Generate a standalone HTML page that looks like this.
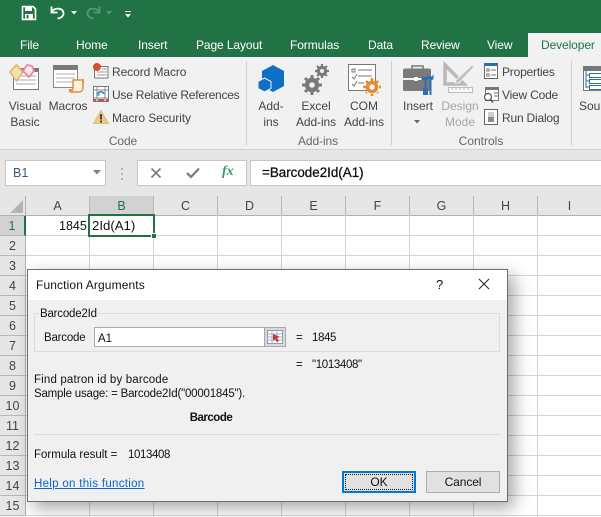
<!DOCTYPE html>
<html><head><meta charset="utf-8">
<style>
html,body{margin:0;padding:0;width:601px;height:517px;overflow:hidden;background:#fff}
body{position:relative;font-family:"Liberation Sans",sans-serif;font-size:12px;color:#444}
.a{position:absolute}
.t{position:absolute;white-space:nowrap;line-height:16px;transform-origin:0 50%}
.c{text-align:center;transform-origin:50% 50%}
.tab{color:#fff;top:37px;letter-spacing:-.1px}
.r{color:#444}
svg{position:absolute;overflow:visible}
.hl{position:absolute;left:0;width:601px;height:1px;background:#d4d4d4}
.vl{position:absolute;top:215px;width:1px;height:302px;background:#d4d4d4}
.ch{position:absolute;top:196px;height:19px;line-height:21px;text-align:center;width:63px;color:#444;font-size:12.5px;border-right:1px solid #b8b8b8;border-bottom:1px solid #b0b0b0}
.rh{position:absolute;left:0;width:25px;height:19px;line-height:21px;text-align:center;background:#e6e6e6;border-right:1px solid #b0b0b0;border-bottom:1px solid #b8b8b8;color:#444;font-size:12.5px}
.d{color:#111}
</style></head><body>

<div class="a" style="left:0;top:0;width:601px;height:57px;background:#217346"></div>
<div class="a" style="left:0;top:57px;width:601px;height:92px;background:#f1f1f1"></div>
<div class="a" style="left:0;top:149px;width:601px;height:47px;background:#e6e6e6;border-top:1px solid #d0d0d0;box-sizing:border-box"></div>

<!-- QAT -->
<svg style="left:22px;top:6px" width="14" height="14" viewBox="0 0 14 14"><path d="M0.5 0.5H11L13.5 3V13.5H0.5Z" fill="none" stroke="#fff" stroke-width="1.6"/><rect x="3" y="1" width="7" height="4" fill="#fff"/><rect x="3" y="8" width="8" height="5" fill="#fff"/><rect x="4.5" y="9" width="2" height="3.5" fill="#217346"/></svg>
<svg style="left:51px;top:6px" width="14" height="14" viewBox="0 0 14 14"><path d="M1 5.5C4 1.5 12 1.5 12.5 7C12.8 10.5 9 12.5 6.5 12.5" fill="none" stroke="#fff" stroke-width="1.8"/><path d="M0.5 0.5V6.5H6.5" fill="none" stroke="#fff" stroke-width="1.8"/></svg>
<svg style="left:71px;top:11px" width="6" height="4"><path d="M0 0H6L3 3.5Z" fill="#fff"/></svg>
<svg style="left:86px;top:6px" width="14" height="14" viewBox="0 0 14 14"><path d="M13 5.5C10 1.5 2 1.5 1.5 7C1.2 10.5 5 12.5 7.5 12.5" fill="none" stroke="#5c9478" stroke-width="1.8"/><path d="M13.5 0.5V6.5H7.5" fill="none" stroke="#5c9478" stroke-width="1.8"/></svg>
<svg style="left:106px;top:11px" width="6" height="4"><path d="M0 0H6L3 3.5Z" fill="#5c9478"/></svg>
<svg style="left:125px;top:11px" width="7" height="7"><rect x="0" y="0" width="6" height="1" fill="#fff"/><path d="M0 3H6L3 6.5Z" fill="#fff"/></svg>

<!-- Tabs -->
<div class="a" style="left:528px;top:33px;width:73px;height:24px;background:#f1f1f1"></div>
<div class="t tab" style="left:20px">File</div>
<div class="t tab" style="left:76px">Home</div>
<div class="t tab" style="left:138px">Insert</div>
<div class="t tab" style="left:196px;">Page Layout</div>
<div class="t tab" style="left:290px">Formulas</div>
<div class="t tab" style="left:368px">Data</div>
<div class="t tab" style="left:421px">Review</div>
<div class="t tab" style="left:487px">View</div>
<div class="t tab" style="left:541px;color:#217346">Developer</div>

<!-- Ribbon separators -->
<div class="a" style="left:246px;top:61px;width:1px;height:84px;background:#d0d0d0"></div>
<div class="a" style="left:391px;top:61px;width:1px;height:84px;background:#d0d0d0"></div>
<div class="a" style="left:571px;top:61px;width:1px;height:84px;background:#d0d0d0"></div>

<!-- Visual Basic icon -->
<svg style="left:8px;top:62px" width="34" height="30" viewBox="0 0 34 30">
<rect x="5.500" y="6.500" width="25" height="21" fill="#fff" stroke="#7a7a7a"/><rect x="5" y="6" width="26" height="4" fill="#7a7a7a"/>
<path d="M8 14H28M8 18H28M8 22H28" stroke="#aaa"/>
<path d="M8.500 3L15 10L8.500 19L2 10Z" fill="#f3e2b5" stroke="#e3bb72" stroke-width="1.800"/>
<path d="M19 3L24 4L26 9L21 15L15 9Z" fill="#fbe6ea" stroke="#e58a9f" stroke-width="1.800"/>
</svg>
<div class="t c" style="left:4px;width:42px;top:98px">Visual</div>
<div class="t c" style="left:4px;width:42px;top:114px">Basic</div>

<!-- Macros icon -->
<svg style="left:52px;top:64px" width="34" height="30" viewBox="0 0 34 30">
<rect x="1.500" y="1.500" width="24" height="22" fill="#fff" stroke="#8a8a8a"/><rect x="1" y="1" width="25" height="5" fill="#7a7a7a"/>
<path d="M4 10H23M4 14H23M4 18H23" stroke="#b0b0b0"/>
<path d="M21 16H31V24C31 26.500 29 28 27 28H18C20 27 21 26 21 24Z" fill="#fbf0e2" stroke="#e2913e" stroke-width="1.500"/>
<path d="M17 25H21V28H17Z" fill="#e2913e"/><path d="M30 15H32V19H30Z" fill="#e2913e"/>
</svg>
<div class="t c" style="left:46px;width:44px;top:98px;letter-spacing:-.1px">Macros</div>

<!-- Small code icons -->
<svg style="left:93px;top:63px" width="16" height="16" viewBox="0 0 16 16"><rect x="1.500" y="3.500" width="13.500" height="11.500" fill="#fff" stroke="#777"/><path d="M9 6H14M4 9H14M4 12H14" stroke="#999"/><circle cx="4" cy="4" r="4" fill="#d2502e"/></svg>
<svg style="left:93px;top:86px" width="16" height="16" viewBox="0 0 16 16"><rect x="0.500" y="0.500" width="15" height="15" fill="#fff" stroke="#777"/><path d="M0 4H16M4 0V16M12 0V16M0 12H16" stroke="#888"/><path d="M5 8C6 5 10 5 11 8" fill="none" stroke="#2f7cc1" stroke-width="1.500"/><path d="M4 6V9H7" fill="none" stroke="#2f7cc1"/><rect x="1" y="13" width="2" height="2" fill="#d2502e"/><rect x="5" y="13" width="6" height="2" fill="#d2502e"/><rect x="13" y="13" width="2" height="2" fill="#d2502e"/></svg>
<svg style="left:93px;top:110px" width="16" height="15" viewBox="0 0 16 15"><path d="M8 0.500L15.500 13.500H0.500Z" fill="#eec88a" stroke="#e3bb7a"/><rect x="7" y="4" width="2" height="5.500" fill="#444"/><rect x="7" y="10.500" width="2" height="2" fill="#444"/></svg>
<div class="t" style="left:112px;top:64px;letter-spacing:-.08px">Record Macro</div>
<div class="t" style="left:112px;top:87px;letter-spacing:-.23px">Use Relative References</div>
<div class="t" style="left:112px;top:110px;letter-spacing:-.08px">Macro Security</div>
<div class="t c" style="left:100px;width:46px;top:133px;color:#666;letter-spacing:-.1px">Code</div>

<!-- Add-ins icon -->
<svg style="left:258px;top:65px" width="27" height="28" viewBox="0 0 27 28">
<path d="M15 0L26 6V21L15 27L4 21V6Z" fill="#0f6fc6"/>
<path d="M6.500 13L13 16.500V23.500L6.500 27L0 23.500V16.500Z" fill="#0f6fc6" stroke="#f1f1f1" stroke-width="1"/>
</svg>
<div class="t c" style="left:251px;width:40px;top:98px">Add-</div>
<div class="t c" style="left:251px;width:40px;top:114px">ins</div>

<!-- Excel addins icon -->
<svg style="left:302px;top:63px" width="28" height="32" viewBox="0 0 28 32">
<g fill="none" stroke="#7a7a7a"><circle cx="20" cy="8" r="3.600" stroke-width="3.200"/><path d="M20 1V15M13 8H27M15 3L25 13M25 3L15 13" stroke-width="2.200" stroke-dasharray="2 10"/>
<circle cx="10" cy="22" r="5" stroke-width="4.400"/><path d="M10 12V32M0 22H20M3 15L17 29M17 15L3 29" stroke-width="3" stroke-dasharray="3 14"/></g>
</svg>
<div class="t c" style="left:294px;width:44px;top:98px">Excel</div>
<div class="t c" style="left:294px;width:44px;top:114px;letter-spacing:-.1px">Add-ins</div>

<!-- COM icon -->
<svg style="left:347px;top:63px" width="34" height="33" viewBox="0 0 34 33">
<rect x="1.500" y="1.500" width="27" height="26" fill="#fff" stroke="#777"/>
<rect x="5" y="6" width="3" height="3" fill="none" stroke="#777"/><path d="M11 7H25M11 13H25M11 20H17" stroke="#777"/><path d="M5 14L7 16L10 11M5 21L7 23L10 18" fill="none" stroke="#777"/>
<circle cx="25" cy="24" r="4.500" fill="none" stroke="#e88a31" stroke-width="3.600"/><path d="M25 15V33M16 24H34M19 18L31 30M31 18L19 30" stroke="#e88a31" stroke-width="2.600" stroke-dasharray="3 13"/>
</svg>
<div class="t c" style="left:341px;width:46px;top:98px">COM</div>
<div class="t c" style="left:341px;width:46px;top:114px;letter-spacing:-.1px">Add-ins</div>
<div class="t c" style="left:296px;width:44px;top:133px;color:#666;letter-spacing:-.1px">Add-ins</div>

<!-- Insert icon -->
<svg style="left:403px;top:64px" width="32" height="32" viewBox="0 0 32 32">
<path d="M9 5V2H20V5" fill="none" stroke="#7a7a7a" stroke-width="1.600"/>
<path d="M0 6Q0 4.500 2 4.500H26Q28 4.500 28 6V14H0Z" fill="#7a7a7a"/>
<path d="M0 16H28V26Q28 27 26 27H2Q0 27 0 26Z" fill="#7a7a7a"/>
<rect x="11" y="13" width="4" height="4" fill="#fff"/><path d="M15 15H19" stroke="#fff"/>
<path d="M19 14H31V32H19Z" fill="#f1f1f1" opacity="0"/>
<path d="M17.500 13H24V16H22.500V24H24V31H19V24H20.500V16H17.500Z" fill="#2b6fb0" transform="translate(1 0)"/>
<path d="M25 10V14Q25 16 27 16V31H29V16Q31 16 31 14V10L29.500 12.500H26.500Z" fill="#2b6fb0" transform="translate(-.5 0)"/>
</svg>
<div class="t c" style="left:398px;width:40px;top:98px">Insert</div>
<svg style="left:414px;top:120px" width="6" height="4"><path d="M0 0H6L3 3.500Z" fill="#666"/></svg>

<!-- Design mode icon -->
<svg style="left:444px;top:63px" width="32" height="32" viewBox="0 0 32 32">
<path d="M1 2V21H20Z" fill="none" stroke="#b8b8b8" stroke-width="3.400"/>
<path d="M12 17L28 2L30 4L15 20H11Z" fill="#bdbdbd" stroke="#f1f1f1"/>
<rect x="4.500" y="24.500" width="24" height="5" fill="#f8f8f8" stroke="#bdbdbd"/><path d="M8 25V27M12 25V27M16 25V27M20 25V27M24 25V27" stroke="#bdbdbd"/>
</svg>
<div class="t c" style="left:439px;width:42px;top:98px;color:#a6a6a6">Design</div>
<div class="t c" style="left:439px;width:42px;top:114px;color:#a6a6a6">Mode</div>

<!-- Small control icons -->
<svg style="left:484px;top:63px" width="14" height="16" viewBox="0 0 14 16"><rect x="0.500" y="0.500" width="13" height="15" fill="#fff" stroke="#666"/><rect x="0" y="0" width="14" height="3" fill="#2b6fb0"/><circle cx="4" cy="7" r="1.300" fill="none" stroke="#777"/><circle cx="4" cy="12" r="1.300" fill="none" stroke="#777"/><path d="M7 7H12M7 12H12" stroke="#777"/></svg>
<svg style="left:483px;top:87px" width="16" height="16" viewBox="0 0 16 16"><rect x="2.500" y="0.500" width="13" height="13" fill="#fff" stroke="#777"/><rect x="2" y="0" width="14" height="3" fill="#777"/><path d="M11 6H15M11 9H15" stroke="#777"/><circle cx="5" cy="10" r="3.500" fill="#fff" stroke="#555" stroke-width="1.200"/><path d="M7.500 12.500L10 15.500" stroke="#555" stroke-width="1.500"/></svg>
<svg style="left:484px;top:109px" width="14" height="16" viewBox="0 0 14 16"><rect x="0.500" y="0.500" width="13" height="15" fill="#fff" stroke="#666"/><rect x="4" y="3" width="6" height="5" fill="#d0d0d0"/><rect x="4" y="8" width="6" height="5" fill="#8a8a8a"/></svg>
<div class="t" style="left:502px;top:64px;letter-spacing:-.2px">Properties</div>
<div class="t" style="left:502px;top:87px;letter-spacing:-.2px">View Code</div>
<div class="t" style="left:502px;top:110px;letter-spacing:-.2px">Run Dialog</div>
<div class="t c" style="left:455px;width:52px;top:133px;color:#666">Controls</div>

<!-- Source -->
<svg style="left:583px;top:66px" width="18" height="26" viewBox="0 0 18 26"><rect x="0.500" y="0.500" width="24" height="24" fill="#fff" stroke="#777"/><rect x="0" y="0" width="24" height="5" fill="#777"/><path d="M3 5V22M3 9H6M3 15H6M3 21H6" stroke="#2b6fb0"/><rect x="6.500" y="7.500" width="14" height="4" fill="none" stroke="#2b6fb0"/><rect x="6.500" y="13.500" width="14" height="4" fill="none" stroke="#2b6fb0"/><rect x="6.500" y="19.500" width="14" height="4" fill="none" stroke="#2b6fb0"/></svg>
<div class="t" style="left:579px;top:98px">Sour</div>

<!-- Formula bar -->
<div class="a" style="left:5px;top:160px;width:101px;height:26px;background:#fff;border:1px solid #c6c6c6;box-sizing:border-box"></div>
<div class="t" style="left:13px;top:165px;color:#3c5a7c;font-size:12.500px">B1</div>
<svg style="left:93px;top:170px" width="8" height="5"><path d="M0 0H8L4 4.500Z" fill="#808080"/></svg>
<div class="a" style="left:121px;top:168px;width:2px;height:2px;background:#b4b4b4;box-shadow:0 5px 0 #b4b4b4,0 10px 0 #b4b4b4"></div>
<div class="a" style="left:137px;top:160px;width:110px;height:26px;background:#fff;border:1px solid #c6c6c6;box-sizing:border-box"></div>
<svg style="left:150px;top:167px" width="12" height="12"><path d="M1.500 1.500L10.500 10.500M10.500 1.500L1.500 10.500" stroke="#7e7e7e" stroke-width="1.700"/></svg>
<svg style="left:186px;top:167px" width="14" height="12"><path d="M1 6L5 10L13 1.500" fill="none" stroke="#7e7e7e" stroke-width="2.300"/></svg>
<div class="t" style="left:222px;top:164px;font-family:'Liberation Serif',serif;font-style:italic;font-weight:bold;color:#3f9a68;font-size:14px">fx</div>
<div class="a" style="left:250px;top:160px;width:351px;height:26px;background:#fff;border:1px solid #c6c6c6;border-right:0;box-sizing:border-box"></div>
<div class="t" style="left:262px;top:165px;color:#111;font-size:13.400px;-webkit-text-stroke:.3px #111">=Barcode2Id(A1)</div>

<!-- Grid headers -->
<div class="a" style="left:0;top:196px;width:601px;height:20px;background:#e6e6e6"></div>
<div class="a" style="left:0;top:196px;width:25px;height:19px;border-right:1px solid #b0b0b0;border-bottom:1px solid #b0b0b0"></div>
<svg style="left:10px;top:200px" width="13" height="13"><path d="M13 0V13H0Z" fill="#b4b4b4"/></svg>
<div class="ch" style="left:26px">A</div>
<div class="ch" style="left:90px;background:#d2d2d2;color:#217346;border-bottom:1px solid #217346">B</div>
<div class="ch" style="left:154px">C</div>
<div class="ch" style="left:218px">D</div>
<div class="ch" style="left:282px">E</div>
<div class="ch" style="left:346px">F</div>
<div class="ch" style="left:410px">G</div>
<div class="ch" style="left:474px">H</div>
<div class="ch" style="left:538px">I</div>

<!-- Gridlines -->
<div class="hl" style="top:235px"></div><div class="hl" style="top:255px"></div><div class="hl" style="top:275px"></div><div class="hl" style="top:295px"></div><div class="hl" style="top:315px"></div><div class="hl" style="top:335px"></div><div class="hl" style="top:355px"></div><div class="hl" style="top:375px"></div><div class="hl" style="top:395px"></div><div class="hl" style="top:415px"></div><div class="hl" style="top:435px"></div><div class="hl" style="top:455px"></div><div class="hl" style="top:475px"></div><div class="hl" style="top:495px"></div><div class="hl" style="top:515px"></div>
<div class="vl" style="left:89px"></div><div class="vl" style="left:153px"></div><div class="vl" style="left:217px"></div><div class="vl" style="left:281px"></div><div class="vl" style="left:345px"></div><div class="vl" style="left:409px"></div><div class="vl" style="left:473px"></div><div class="vl" style="left:537px"></div>

<!-- Row headers -->
<div class="rh" style="top:216px;background:#d2d2d2;color:#217346;border-right:2px solid #217346;width:24px">1</div>
<div class="rh" style="top:236px">2</div><div class="rh" style="top:256px">3</div><div class="rh" style="top:276px">4</div><div class="rh" style="top:296px">5</div><div class="rh" style="top:316px">6</div><div class="rh" style="top:336px">7</div><div class="rh" style="top:356px">8</div><div class="rh" style="top:376px">9</div><div class="rh" style="top:396px">10</div><div class="rh" style="top:416px">11</div><div class="rh" style="top:436px">12</div><div class="rh" style="top:456px">13</div><div class="rh" style="top:476px">14</div><div class="rh" style="top:496px">15</div>

<!-- Cells -->
<div class="t" style="left:59px;top:218px;color:#111;font-size:12.500px">1845</div>
<div class="a" style="left:88px;top:214px;width:67px;height:23px;border:2px solid #217346;box-sizing:border-box;background:#fff"></div>
<div class="a" style="left:151px;top:233px;width:6px;height:6px;background:#217346;border:1px solid #fff;box-sizing:border-box"></div>
<div class="t" style="left:92px;top:218px;color:#111;font-size:13.200px">2Id(A1)</div>

<!-- Dialog -->
<div class="a" style="left:27px;top:269px;width:481px;height:233px;background:#f0f0f0;border:1px solid #6f6f6f;box-sizing:border-box;box-shadow:6px 6px 16px rgba(0,0,0,.35)">
<div class="a" style="left:0;top:0;width:479px;height:30px;background:#fff"></div>
</div>
<div class="t d" style="left:36px;top:277px;font-size:12px;letter-spacing:.12px">Function Arguments</div>
<div class="t d" style="left:436px;top:277px;font-size:13px">?</div>
<svg style="left:478px;top:278px" width="12" height="12"><path d="M1 1L11 11M11 1L1 11" stroke="#222" stroke-width="1"/></svg>

<div class="a" style="left:34px;top:313px;width:466px;height:39px;border:1px solid #dcdcdc;box-sizing:border-box"></div>
<div class="t d" style="left:39px;top:306px;background:#f0f0f0;padding:0 1px;font-size:11.500px;letter-spacing:-.2px">Barcode2Id</div>
<div class="t d" style="left:44px;top:330px;font-size:11.500px;letter-spacing:-.2px">Barcode</div>
<div class="a" style="left:94px;top:327px;width:172px;height:20px;background:#fff;border:1px solid #ababab;box-sizing:border-box"></div>
<div class="t d" style="left:98px;top:331px;font-size:11.500px">A1</div>
<div class="a" style="left:264px;top:327px;width:22px;height:20px;background:#d9d9d9;border:1px solid #a8a8a8;box-sizing:border-box"></div>
<svg style="left:267px;top:330px" width="16" height="14" viewBox="0 0 16 14"><rect x="0.500" y="0.500" width="15" height="13" fill="#fff" stroke="#8a9bb0"/><path d="M0 4H16M0 7H16M0 10H16M5 0V14M10 0V14" stroke="#9fb2c8"/><path d="M6 4L13 7L10 8L12 11L10 12L8 9L6 11Z" fill="#c8372d"/></svg>
<div class="t d" style="left:296px;top:330px;font-size:11.500px">=</div>
<div class="t d" style="left:312px;top:330px;font-size:11.500px;letter-spacing:-.4px">1845</div>
<div class="t d" style="left:296px;top:357px;font-size:11.500px">=</div>
<div class="t d" style="left:312px;top:357px;font-size:11.500px;letter-spacing:-.35px">"1013408"</div>

<div class="t d" style="left:34px;top:372px;font-size:11.500px;letter-spacing:.16px">Find patron id by barcode</div>
<div class="t d" style="left:34px;top:386px;font-size:11.500px;letter-spacing:-.2px">Sample usage: = Barcode2Id("00001845").</div>
<div class="t c d" style="left:160px;width:102px;top:410px;font-size:11.500px;font-weight:bold;letter-spacing:-.5px">Barcode</div>
<div class="a" style="left:34px;top:434px;width:467px;height:1px;background:#dcdcdc"></div>
<div class="t d" style="left:34px;top:447px;font-size:11.500px">Formula result =</div>
<div class="t d" style="left:128px;top:447px;font-size:11.500px;letter-spacing:-.4px">1013408</div>
<div class="t" style="left:34px;top:476px;font-size:11.500px;color:#0a66cc;text-decoration:underline;letter-spacing:.3px">Help on this function</div>

<div class="a" style="left:342px;top:471px;width:74px;height:22px;background:#e1e1e1;border:2px solid #0078d7;box-sizing:border-box"></div>
<div class="a" style="left:345px;top:474px;width:68px;height:16px;border:1px dotted #111;box-sizing:border-box"></div>
<div class="t c d" style="left:342px;width:74px;top:474px;font-size:12px">OK</div>
<div class="a" style="left:426px;top:471px;width:74px;height:22px;background:#e1e1e1;border:1px solid #adadad;box-sizing:border-box"></div>
<div class="t c d" style="left:426px;width:74px;top:474px;font-size:12px;letter-spacing:-.1px">Cancel</div>

</body></html>
